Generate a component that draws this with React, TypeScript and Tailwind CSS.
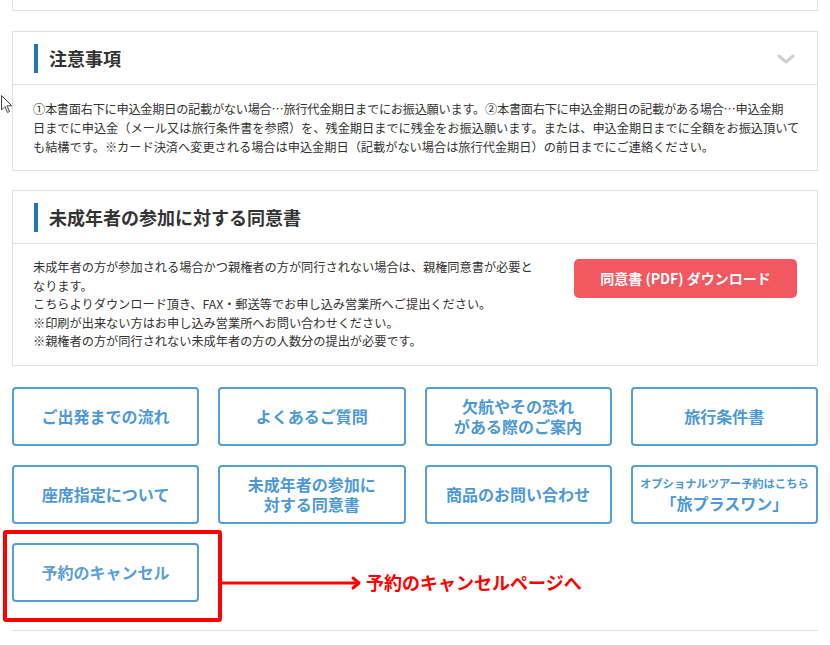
import React from "react";

const FONT = { fontFamily: '"Noto Sans CJK JP", "Noto Sans", sans-serif' };

function LinkButton({ children }: { children: React.ReactNode }) {
  return (
    <div className="h-[59px] rounded-[4px] border-2 border-[#529fd9] bg-white flex flex-col items-center justify-center text-center text-[#4c99d6] font-bold text-[16px] leading-[21px]">
      {children}
    </div>
  );
}

function CardHeader({ title, chevron }: { title: string; chevron?: boolean }) {
  return (
    <div className="h-[53px] border-b border-[#e3e3e3] flex items-center pl-[21px] pr-[22px]">
      <div className="w-[4px] h-[29px] bg-[#1f78b4]" />
      <div className="ml-[11px] text-[18px] font-bold text-[#333] flex-1">{title}</div>
      {chevron && (
        <svg width="18" height="10" viewBox="0 0 18 10" className="mt-[1px]">
          <path d="M2 2 L9 8 L16 2" fill="none" stroke="#cfcfcf" strokeWidth="3" strokeLinecap="round" strokeLinejoin="round" />
        </svg>
      )}
    </div>
  );
}

export default function App() {
  return (
    <div className="relative w-[830px] h-[645px] bg-white overflow-hidden" style={FONT}>
      <div className="px-[12px]">
        {/* top card remnant */}
        <div className="h-[11px] border-x border-b border-[#e0e0e0]" />

        {/* 注意事項 */}
        <div className="mt-[20px] border border-[#e0e0e0]">
          <CardHeader title="注意事項" chevron />
          <div className="px-[20px] pt-[15px] pb-[13px] text-[12.2px] leading-[19px] text-[#333] whitespace-nowrap">
            <div className="tracking-[-0.26px]">①本書面右下に申込金期日の記載がない場合…旅行代金期日までにお振込願います。②本書面右下に申込金期日の記載がある場合…申込金期</div>
            <div>日までに申込金（メール又は旅行条件書を参照）を、残金期日までに残金をお振込願います。または、申込金期日までに全額をお振込頂いて</div>
            <div>も結構です。※カード決済へ変更される場合は申込金期日（記載がない場合は旅行代金期日）の前日までにご連絡ください。</div>
          </div>
        </div>

        {/* 同意書 */}
        <div className="mt-[19px] border border-[#e0e0e0]">
          <CardHeader title="未成年者の参加に対する同意書" />
          <div className="flex items-start justify-between pl-[20px] pr-[20px] pt-[14px] pb-[14px]">
            <div className="w-[505px] text-[12.2px] leading-[18.6px] text-[#333]">
              <p>未成年者の方が参加される場合かつ親権者の方が同行されない場合は、親権同意書が必要となります。</p>
              <p>こちらよりダウンロード頂き、FAX・郵送等でお申し込み営業所へご提出ください。</p>
              <p>※印刷が出来ない方はお申し込み営業所へお問い合わせください。</p>
              <p>※親権者の方が同行されない未成年者の方の人数分の提出が必要です。</p>
            </div>
            <div className="mt-[1px] w-[223px] h-[39px] rounded-[5px] bg-[#f2585f] text-white font-bold text-[14px] flex items-center justify-center">
              同意書 (PDF) ダウンロード
            </div>
          </div>
        </div>

        {/* link buttons */}
        <div className="mt-[21px] grid grid-cols-4 gap-x-[19px] gap-y-[19px]">
          <LinkButton>ご出発までの流れ</LinkButton>
          <LinkButton>よくあるご質問</LinkButton>
          <LinkButton>
            <span className="leading-[20px]">欠航やその恐れ<br />がある際のご案内</span>
          </LinkButton>
          <LinkButton>旅行条件書</LinkButton>
          <LinkButton>座席指定について</LinkButton>
          <LinkButton>
            <span className="leading-[20px]">未成年者の参加に<br />対する同意書</span>
          </LinkButton>
          <LinkButton>商品のお問い合わせ</LinkButton>
          <LinkButton>
            <span className="text-[11.3px] leading-[18px]">オプショナルツアー予約はこちら</span>
            <span className="leading-[22px]">「旅プラスワン」</span>
          </LinkButton>
          <LinkButton>
            <span className="font-semibold text-[#5a9fd6]">予約のキャンセル</span>
          </LinkButton>
        </div>

        <div className="mt-[28px] border-t border-[#e0e0e0]" />
      </div>

      {/* annotation overlay */}
      <div className="absolute left-[3px] top-[530px] w-[219px] h-[92px] border-[4px] border-[#ff0000] rounded-[3px]" />
      <svg className="absolute left-[220px] top-[575px]" width="145" height="16" viewBox="0 0 145 16">
        <line x1="0" y1="8" x2="138" y2="8" stroke="#ff0000" strokeWidth="3" />
        <path d="M133 3 L139 8 L133 13" fill="none" stroke="#ff0000" strokeWidth="3" strokeLinecap="round" strokeLinejoin="round" />
      </svg>
      <div className="absolute left-[366px] top-[570px] text-[18px] leading-[24px] font-bold text-[#ff0000]">
        予約のキャンセルページへ
      </div>

      {/* mouse cursor */}
      <svg className="absolute left-[1px] top-[95px]" width="12" height="19" viewBox="0 0 12 19">
        <path d="M0.5 0.5 L0.5 15 L4 11.5 L6.5 17.5 L8.5 16.5 L6 10.8 L10.8 10.8 Z" fill="#fff" stroke="#444" strokeWidth="1" strokeLinejoin="round" />
      </svg>
    </div>
  );
}
